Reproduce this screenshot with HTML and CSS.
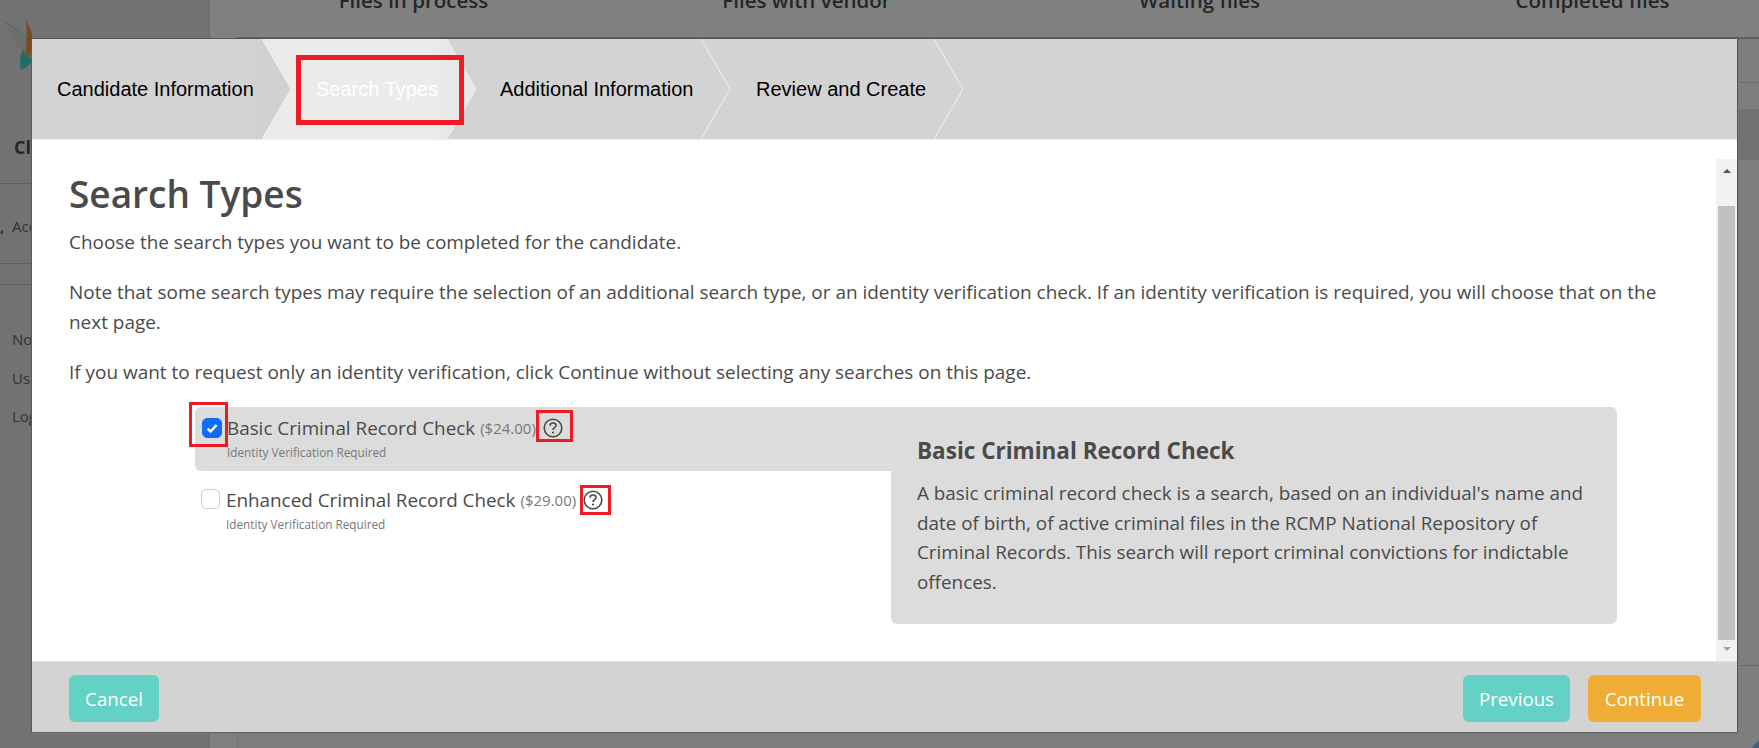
FILE: index.html
```html
<!DOCTYPE html>
<html lang="en">
<head>
<meta charset="utf-8">
<title>Search Types</title>
<link rel="stylesheet" href="styles.css">
</head>
<body>
<div class="app">
  <aside class="sidebar">
    <div class="logo">
      <svg width="44" height="50" viewBox="0 0 44 50">
        <path d="M1 4 C8 8 15 12 22 21 C22 27 21 30 20 33 C13 28 7 18 1 4Z" fill="#6d6d6d"/>
        <path d="M1 3 C9 7 16 12 23 20" fill="none" stroke="#2c6f68" stroke-width="1"/>
        <path d="M21 0 C27 10 29 20 27 29 C26 35 23 38 21 39 C20 32 23 22 21 0Z" fill="#7d4a1f"/>
        <path d="M16 50 C14 41 15 34 19 29 C20 35 24 39 29 38 C26 44 22 47 16 50Z" fill="#1f6f66"/>
      </svg>
    </div>
    <div class="side-title">Client</div>
    <div class="side-account"><span class="side-comma">,</span>Account</div>
    <div class="side-gap"></div>
    <ul class="side-menu">
      <li>Notifications</li>
      <li>Users</li>
      <li>Logout</li>
    </ul>
  </aside>
  <main class="main">
    <div class="file-tabs">
      <span>Files in process</span>
      <span>Files with vendor</span>
      <span>Waiting files</span>
      <span>Completed files</span>
    </div>
    <div class="file-card">
      <div class="card-head"></div>
      <div class="card-band"></div>
      <div class="card-body"></div>
    </div>
  </main>
  <div class="chat-bubble"></div>
</div>

<section class="modal">
  <nav class="steps">
    <div class="step step-first">
      <span class="step-label">Candidate Information</span>
      <svg class="chev" width="37" height="100" viewBox="0 0 37 100"><polygon class="chev-fill" points="0,0 8,0 37,50 8,100 0,100"/><polyline class="chev-line" points="8,0 37,50 8,100"/></svg>
    </div>
    <div class="step step-active">
      <span class="step-label">Search Types</span>
      <svg class="chev" width="37" height="100" viewBox="0 0 37 100"><polygon class="chev-fill" points="0,0 8,0 37,50 8,100 0,100"/><polyline class="chev-line" points="8,0 37,50 8,100"/></svg>
      <span class="mark-tab"></span>
    </div>
    <div class="step step-third">
      <span class="step-label">Additional Information</span>
      <svg class="chev" width="37" height="100" viewBox="0 0 37 100"><polyline class="chev-line" points="8,0 37,50 8,100"/></svg>
    </div>
    <div class="step step-fourth">
      <span class="step-label">Review and Create</span>
      <svg class="chev" width="37" height="100" viewBox="0 0 37 100"><polyline class="chev-line" points="8,0 37,50 8,100"/></svg>
    </div>
  </nav>

  <div class="modal-body">
    <div class="content">
      <h1>Search Types</h1>
      <p>Choose the search types you want to be completed for the candidate.</p>
      <p>Note that some search types may require the selection of an additional search type, or an identity verification check. If an identity verification is required, you will choose that on the next page.</p>
      <p>If you want to request only an identity verification, click Continue without selecting any searches on this page.</p>
      <div class="search-grid">
        <div class="options">
          <div class="option option-selected">
            <span class="check check-on marked-check">
              <svg width="14" height="14" viewBox="0 0 14 14"><path d="M2.5 7.5 L5.6 10.5 L11.5 4" fill="none" stroke="#fff" stroke-width="2.4"/></svg>
            </span>
            <div class="option-text">
              <div class="option-title">Basic Criminal Record Check <span class="price">($24.00)</span>
                <span class="help help-first"><svg width="20" height="20" viewBox="0 0 20 20"><circle cx="10" cy="10" r="8.8" fill="none" stroke="#4a4a4a" stroke-width="1.6"/><path d="M7 7.8 C7 5.8 8.4 5 10 5 C11.7 5 13 6 13 7.6 C13 9.6 10 9.8 10 12" fill="none" stroke="#4a4a4a" stroke-width="1.6"/><circle cx="10" cy="14.6" r="1.1" fill="#4a4a4a"/></svg></span>
              </div>
              <div class="option-note">Identity Verification Required</div>
            </div>
          </div>
          <div class="option option-plain">
            <span class="check"></span>
            <div class="option-text">
              <div class="option-title">Enhanced Criminal Record Check <span class="price">($29.00)</span>
                <span class="help help-second"><svg width="20" height="20" viewBox="0 0 20 20"><circle cx="10" cy="10" r="8.8" fill="none" stroke="#4a4a4a" stroke-width="1.6"/><path d="M7 7.8 C7 5.8 8.4 5 10 5 C11.7 5 13 6 13 7.6 C13 9.6 10 9.8 10 12" fill="none" stroke="#4a4a4a" stroke-width="1.6"/><circle cx="10" cy="14.6" r="1.1" fill="#4a4a4a"/></svg></span>
              </div>
              <div class="option-note">Identity Verification Required</div>
            </div>
          </div>
        </div>
        <article class="info">
          <h2>Basic Criminal Record Check</h2>
          <p>A basic criminal record check is a search, based on an individual's name and date of birth, of active criminal files in the RCMP National Repository of Criminal Records. This search will report criminal convictions for indictable offences.</p>
        </article>
      </div>
    </div>
    <div class="scrollbar">
      <span class="arrow arrow-up"></span>
      <span class="thumb"></span>
      <span class="arrow arrow-down"></span>
    </div>
  </div>

  <footer class="modal-footer">
    <button class="btn btn-teal btn-cancel">Cancel</button>
    <div class="footer-right">
      <button class="btn btn-teal btn-prev">Previous</button>
      <button class="btn btn-orange btn-next">Continue</button>
    </div>
  </footer>
</section>
</body>
</html>
```
FILE: styles.css
```css
*, *::before, *::after { box-sizing: border-box; }
html, body { margin: 0; padding: 0; height: 748px; overflow: hidden; }
body { font-family: "Open Sans", "Noto Sans", sans-serif; background: #808080; color: #4a4a4a; position: relative; }

/* underlying page, dimmed */
.app { display: flex; height: 748px; color: #262626; position: relative; overflow: hidden; }
.sidebar { width: 210px; flex: none; background: #727272; border-right: 1px solid #6a6a6a; overflow: hidden; }
.logo { padding: 20px 0 0 5px; height: 130px; }
.side-title { padding-left: 14px; height: 54px; font-size: 18px; font-weight: 700; line-height: 34px; border-bottom: 1px solid #5f5f5f; }
.side-account { padding-left: 0; height: 80px; padding-top: 30px; font-size: 15px; line-height: 24px; color: #333; border-bottom: 1px solid #5f5f5f; }
.side-comma { display: inline-block; width: 12px; font-weight: 700; }
.side-gap { height: 21px; border-bottom: 1px solid #5f5f5f; }
.side-menu { list-style: none; margin: 35px 0 0; padding: 0 0 0 12px; font-size: 15px; color: #333; line-height: 38.5px; }
.main { flex: 1; min-width: 0; background: #808080; }
.file-tabs { display: flex; height: 50px; margin-top: -13px; padding-left: 7px; font-size: 20.5px; font-weight: 600; }
.file-tabs span { flex: none; width: 393px; text-align: center; line-height: 26px; }
.file-card { margin-left: 27px; height: 711px; border-top: 2px solid #5f5f5f; border-left: 1px solid #737373; background: #7e7e7e; }
.card-head { height: 44px; border-bottom: 1px solid #6c6c6c; }
.card-band { height: 51px; margin-top: 26px; background: #727272; }
.card-body { height: 506px; border-bottom: 1px solid #6c6c6c; }
.chat-bubble { position: absolute; left: 1740px; top: 727px; width: 110px; height: 110px; border-radius: 50%; background: #3f5d7e; }

/* modal */
.modal { position: absolute; left: 31px; top: 38px; width: 1707px; height: 695px; background: #fff; border: 1px solid #555; border-left-color: #5a5a5a; border-bottom-color: #666; display: flex; flex-direction: column; box-shadow: 1px 1px 0 #777; }

.steps { display: flex; height: 100px; flex: none; background: #d3d3d3; font-family: "Liberation Sans", Arial, sans-serif; font-size: 20px; color: #000; }
.step { position: relative; height: 100px; display: flex; align-items: center; flex: none; }
.step-label { position: relative; z-index: 2; white-space: nowrap; }
.chev { position: absolute; top: 0; right: 0; z-index: 1; }
.chev-fill { fill: #d1d1d1; }
.chev-line { fill: none; stroke: #f1f1f1; stroke-width: 1; }
.step-first { width: 259px; padding-left: 25px; }
.step-active { width: 214px; margin-left: -29px; padding-left: 54px; }
.step-active::before { content: ""; position: absolute; inset: 0; background: #ebebeb; clip-path: polygon(0 0, 184px 0, 214px 50px, 184px 100px, 0 100px, 29px 50px); }
.step-active .step-label { color: #fff; }
.step-active .chev-fill { fill: #e8e8e8; }
.step-active .chev-line { stroke: #ebebeb; }
.step-third { width: 284px; margin-left: -30px; padding-left: 54px; }
.step-fourth { width: 263px; margin-left: -30px; padding-left: 56px; }
.mark-tab { position: absolute; left: 34px; top: 16px; width: 168px; height: 70px; border: 5px solid #ed1c24; z-index: 3; }

.modal-body { flex: 1; min-height: 0; display: flex; border-top: 1px solid #eee; }
.content { flex: 1; min-width: 0; padding: 32px 0 0 37px; }
h1 { margin: 0 0 11px; font-size: 37px; line-height: 44px; font-weight: 600; color: #4a4a4a; }
.content > p { margin: 0 30px 20px 0; font-size: 18.95px; line-height: 30px; color: #4a4a4a; }
.search-grid { display: flex; margin: 0 99px 0 126px; }
.options { width: 696px; flex: none; }
.option { display: flex; height: 64px; padding: 10px 0 0 6px; gap: 6px; border-radius: 6px 0 0 6px; }
.option-plain { padding-top: 18px; }
.option-selected { background: #dcdcdc; }
.check { width: 19px; height: 20px; flex: none; border-radius: 5px; background: #fff; border: 1px solid #ccc; position: relative; display: flex; align-items: center; justify-content: center; }
.check-on { width: 20px; margin: 1px -1px 0 1px; background: #0d6efd; border-color: #0d6efd; }
.marked-check::after { content: ""; position: absolute; left: -14px; top: -17px; width: 39px; height: 45px; border: 3px solid #ed1c24; }
.option-title { font-size: 18.85px; line-height: 22px; color: #4a4a4a; white-space: nowrap; display: flex; align-items: center; gap: 5px; }
.price { font-size: 15px; color: #777; }
.help { position: relative; display: inline-flex; width: 20px; height: 20px; margin-left: 2px; }
.help::after { content: ""; position: absolute; border: 3px solid #ed1c24; }
.help-first::after { left: -7px; top: -8px; width: 37px; height: 32px; }
.help-second::after { left: -3px; top: -5px; width: 31px; height: 30px; }
.option-note { margin-top: 4px; font-size: 11.75px; line-height: 18px; color: #777; }
.info { flex: 1; height: 217px; padding: 27px 26px 0; background: #dcdcdc; border-radius: 0 6px 6px 6px; }
.info h2 { margin: 0 0 11px; font-size: 22.5px; line-height: 34px; font-weight: 700; color: #4a4a4a; }
.info p { margin: 0; font-size: 18.85px; line-height: 29.5px; color: #4a4a4a; }

.scrollbar { width: 21px; flex: none; margin-top: 19px; background: #f1f1f1; display: flex; flex-direction: column; align-items: center; position: relative; }
.thumb { width: 17px; height: 434px; background: #c1c1c1; margin-top: 33px; }
.arrow { width: 0; height: 0; border-left: 4px solid transparent; border-right: 4px solid transparent; }
.arrow-up { margin-top: 10px; border-bottom: 4px solid #505050; }
.arrow-down { margin-top: 7px; border-top: 4px solid #a3a3a3; }

.modal-footer { height: 71px; flex: none; display: flex; justify-content: space-between; padding: 13px 36px 0 37px; background: #d3d3d3; border-top: 1px solid #e3e3e3; }
.footer-right { display: flex; gap: 18px; }
.btn { height: 47px; border: 0; border-radius: 6px; color: #fff; font-family: inherit; font-size: 18.7px; padding: 0; }
.btn-teal { background: #63d2c4; }
.btn-orange { background: #f0ad36; }
.btn-cancel { width: 90px; }
.btn-prev { width: 107px; }
.btn-next { width: 113px; }
```
